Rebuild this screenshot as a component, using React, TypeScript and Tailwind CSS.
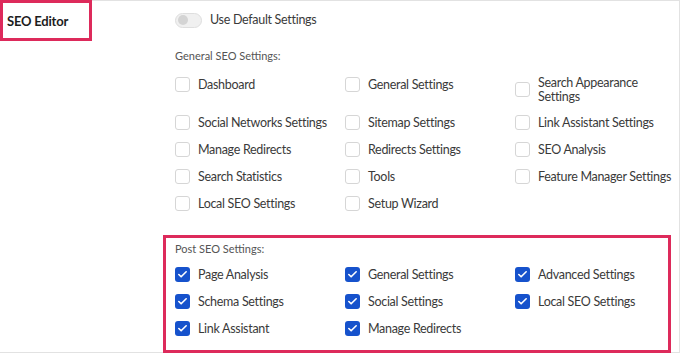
import { Check } from "lucide-react";

const general = [
  "Dashboard",
  "General Settings",
  "Search Appearance|Settings",
  "Social Networks Settings",
  "Sitemap Settings",
  "Link Assistant Settings",
  "Manage Redirects",
  "Redirects Settings",
  "SEO Analysis",
  "Search Statistics",
  "Tools",
  "Feature Manager Settings",
  "Local SEO Settings",
  "Setup Wizard",
];

const post = [
  "Page Analysis",
  "General Settings",
  "Advanced Settings",
  "Schema Settings",
  "Social Settings",
  "Local SEO Settings",
  "Link Assistant",
  "Manage Redirects",
];

function Item({ label, checked }: { label: string; checked?: boolean }) {
  const lines = label.split("|");
  const multi = lines.length > 1;
  return (
    <div className="flex items-center gap-2">
      {checked ? (
        <span className="flex h-[15px] w-[15px] shrink-0 items-center justify-center rounded-[3px] bg-[#1652cc]">
          <Check size={11} strokeWidth={3.5} className="text-white" />
        </span>
      ) : (
        <span className="h-[15px] w-[15px] shrink-0 rounded-[3px] border border-[#d6d6d6] bg-white" />
      )}
      <span
        className={
          multi
            ? "-my-px whitespace-nowrap text-[12.5px] leading-[14px] tracking-[-0.3px] text-[#3a3a3a]"
            : "whitespace-nowrap text-[12.5px] leading-[13px] tracking-[-0.3px] text-[#3a3a3a]"
        }
      >
        {lines.map((l, i) => (
          <span key={i} className="block">
            {l}
          </span>
        ))}
      </span>
    </div>
  );
}

export default function App() {
  return (
    <div
      className="flex h-[353px] w-[680px] border-t border-r border-b border-[#e2e2e2] bg-white"
      style={{ fontFamily: "Lato, 'Open Sans', sans-serif" }}
    >
      <div className="w-[163px] shrink-0">
        <div className="-mt-px h-[41px] w-[92px] border-[3px] border-[#dd2a5b] pl-[4px] pt-[9px] text-[13px] font-bold tracking-[-0.2px] text-[#1d1d1d]">
          SEO Editor
        </div>
      </div>

      <div className="flex flex-1 flex-col pr-[11px]">
        <div className="flex items-center gap-[8px] pl-[12px] pt-[10px]">
          <span className="flex h-[15px] w-[27px] items-center rounded-full border border-[#dedede] bg-[#f0f0f0] px-[2px]">
            <span className="h-[10px] w-[10px] rounded-full bg-[#d4d4d4]" />
          </span>
          <span className="text-[12.5px] tracking-[-0.3px] text-[#3a3a3a]">Use Default Settings</span>
        </div>

        <div className="pl-[12px] pt-[19px] text-[11px] leading-[14px] text-[#555]">General SEO Settings:</div>

        <div className="grid grid-cols-[170px_170px_1fr] items-start gap-y-[12px] pl-[12px] pt-[14px]">
          {general.map((g) => (
            <Item key={g} label={g} />
          ))}
        </div>

        <div className="mt-auto -mb-px h-[118px] border-[3px] border-[#dd2a5b] px-[9px] pt-[4px]">
          <div className="text-[11px] leading-[14px] text-[#555]">Post SEO Settings:</div>
          <div className="grid grid-cols-[170px_170px_1fr] gap-y-[12px] pt-[11px]">
            {post.map((p) => (
              <Item key={p} label={p} checked />
            ))}
          </div>
        </div>
      </div>
    </div>
  );
}
